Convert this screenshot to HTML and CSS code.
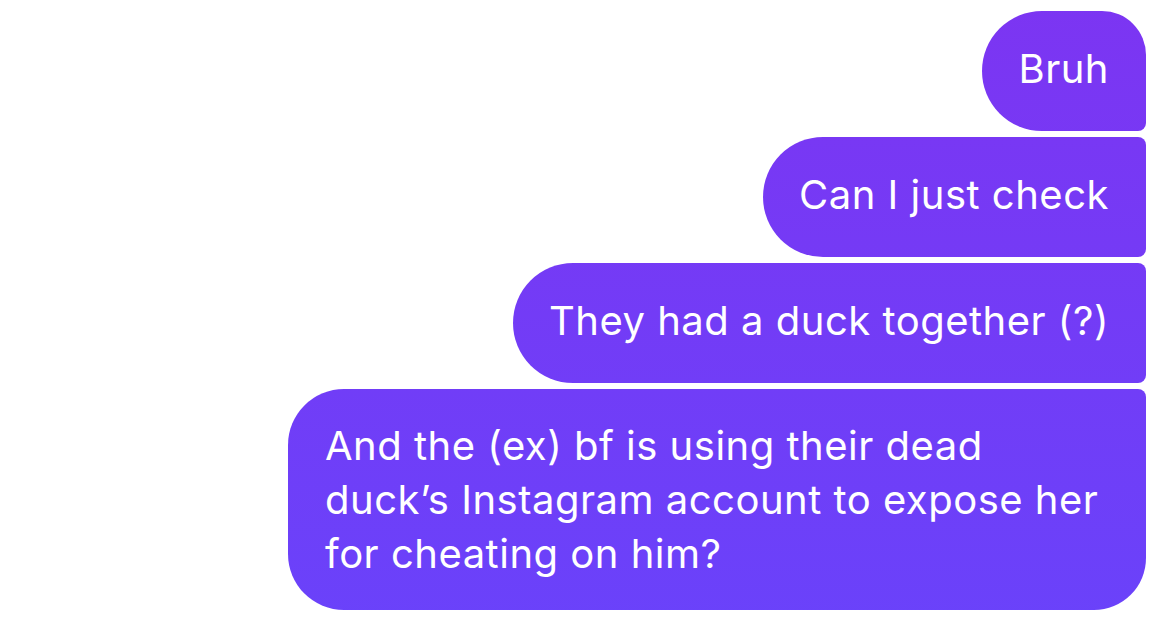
FILE: index.html
```html
<!DOCTYPE html>
<html lang="en">
<head>
    <meta charset="UTF-8">
    <meta name="viewport" content="width=device-width, initial-scale=1.0">
    <title>Messages</title>
    <link rel="stylesheet" href="styles.css">
</head>
<body>
    <div class="thread">
        <div class="bubble first">Bruh</div>
        <div class="bubble">Can I just check</div>
        <div class="bubble">They had a duck together (?)</div>
        <div class="bubble last">And the (ex) bf is using their dead duck’s Instagram account to expose her for cheating on him?</div>
    </div>
</body>
</html>
```

FILE: styles.css
```css
body {
    margin: 0;
    background: #fff;
    font-family: Inter, "Noto Sans", sans-serif;
}

.thread {
    display: flex;
    flex-direction: column;
    align-items: flex-end;
    gap: 6px;
    padding: 11px 24px 0 0;
}

.bubble {
    box-sizing: border-box;
    max-width: 858px;
    padding: 31px 37px 35px 36px;
    border-radius: 60px 8px 8px 60px;
    /* gradient is pinned to the viewport so it flows across the whole group */
    background: linear-gradient(to bottom, #7c35f2, #6a42fa) fixed;
    color: #fff;
    font-size: 40px;
    line-height: 54px;
    letter-spacing: 0.5px;
}

.bubble.first {
    border-top-right-radius: 44px;
}

.bubble.last {
    width: 858px;
    padding: 30px 38px 29px 37px;
    border-radius: 56px 8px 52px 56px;
}
```
